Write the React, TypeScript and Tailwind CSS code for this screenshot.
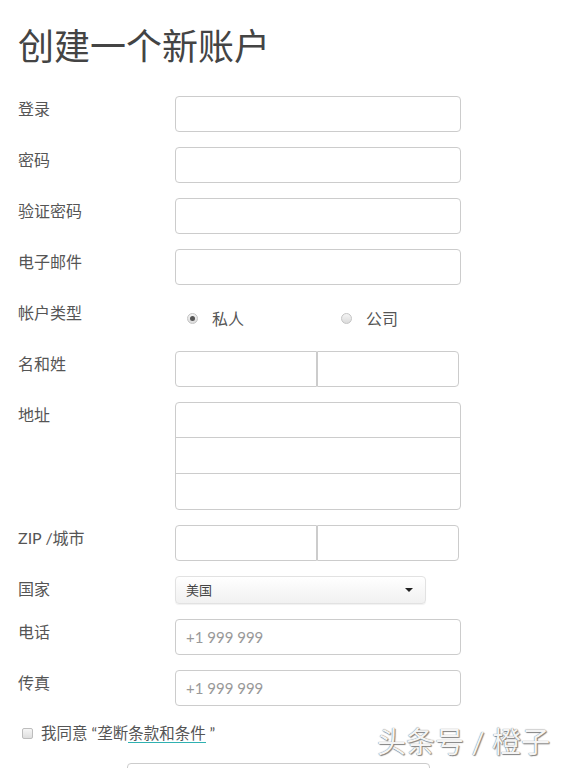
import React from "react";

const font = { fontFamily: 'Lato, "Noto Sans CJK SC", sans-serif' };

function Label({ children }: { children: React.ReactNode }) {
  return (
    <div className="w-[157px] shrink-0 pt-[3px] text-[16px] leading-[20px] text-[#555]">
      {children}
    </div>
  );
}

function TextInput({ placeholder }: { placeholder?: string }) {
  return (
    <input
      placeholder={placeholder}
      className="w-[286px] h-[36px] rounded-[4px] border border-[#cccccc] bg-white pl-[10px] text-[15px] text-[#555] placeholder:text-[#999] outline-none"
      style={font}
    />
  );
}

function SplitInput() {
  return (
    <div className="flex w-[284px] h-[36px]">
      <div className="w-[142px] h-full rounded-l-[4px] border border-[#cccccc] bg-white" />
      <div className="w-[142px] h-full rounded-r-[4px] border border-[#cccccc] bg-white" />
    </div>
  );
}

function Radio({ checked, label }: { checked?: boolean; label: string }) {
  return (
    <div className="flex items-center w-[154px]">
      <span className="w-[11px] h-[11px] rounded-full border border-[#c4c4c4] bg-gradient-to-b from-[#f4f4f4] to-[#dcdcdc] flex items-center justify-center">
        {checked && <span className="w-[5px] h-[5px] rounded-full bg-[#555]" />}
      </span>
      <span className="ml-[14px] text-[16px] leading-[20px] text-[#555] pt-[2px]">{label}</span>
    </div>
  );
}

export default function App() {
  return (
    <div className="relative w-[570px] h-[768px] overflow-hidden bg-white pl-[18px]" style={font}>
      <h1 className="pt-[24px] text-[36px] leading-[44px] text-[#444] font-normal">创建一个新账户</h1>
      <div className="mt-[28px] flex flex-col gap-[15px]">
        <div className="flex">
          <Label>登录</Label>
          <TextInput />
        </div>
        <div className="flex">
          <Label>密码</Label>
          <TextInput />
        </div>
        <div className="flex">
          <Label>验证密码</Label>
          <TextInput />
        </div>
        <div className="flex">
          <Label>电子邮件</Label>
          <TextInput />
        </div>
        <div className="flex h-[36px]">
          <Label>帐户类型</Label>
          <div className="flex items-center pl-[12px]">
            <Radio checked label="私人" />
            <Radio label="公司" />
          </div>
        </div>
        <div className="flex">
          <Label>名和姓</Label>
          <SplitInput />
        </div>
        <div className="flex">
          <Label>地址</Label>
          <div className="w-[286px] h-[108px] rounded-[4px] border border-[#cccccc] flex flex-col">
            <div className="h-[35px] border-b border-[#cccccc]" />
            <div className="h-[36px] border-b border-[#cccccc]" />
            <div className="flex-1" />
          </div>
        </div>
        <div className="flex">
          <Label>ZIP /城市</Label>
          <SplitInput />
        </div>
        <div className="flex">
          <Label>国家</Label>
          <div className="w-[251px] h-[28px] rounded-[4px] border border-[#e2e2e2] bg-gradient-to-b from-white to-[#f1f1f1] shadow-[0_1px_1px_rgba(0,0,0,0.06)] flex items-center justify-between pl-[10px] pr-[12px]">
            <span className="text-[13px] text-[#444] leading-[16px]">美国</span>
            <span className="w-0 h-0 border-l-[4px] border-r-[4px] border-t-[4px] border-l-transparent border-r-transparent border-t-[#222]" />
          </div>
        </div>
        <div className="flex">
          <Label>电话</Label>
          <TextInput placeholder="+1 999 999" />
        </div>
        <div className="flex">
          <Label>传真</Label>
          <TextInput placeholder="+1 999 999" />
        </div>
        <div className="flex items-center h-[24px] pl-[4px]">
          <span className="w-[11px] h-[11px] rounded-[2px] border border-[#bdbdbd] bg-gradient-to-b from-[#f6f6f6] to-[#dedede]" />
          <span className="ml-[8px] text-[15.5px] leading-[20px] text-[#555]">
            我同意 “垄断<span className="border-b border-[#2fb1b1]">条款和条件</span> ”
          </span>
        </div>
      </div>
      <div className="ml-[109px] mt-[18px] w-[303px] h-[40px] rounded-[4px] border border-[#cccccc]" />
      <div className="absolute left-[377px] top-[724px] text-[29px] leading-[36px] text-[#f4f4f4] [text-shadow:0_0_1px_#555,1px_1px_1px_#888]">
        头条号 / 橙子
      </div>
    </div>
  );
}
